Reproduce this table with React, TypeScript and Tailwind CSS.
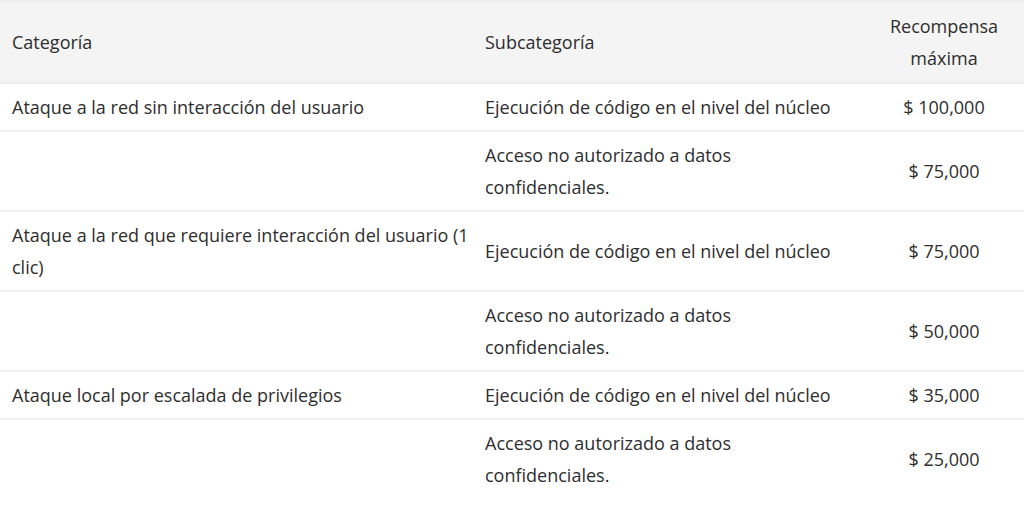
const rows = [
  { cat: "Ataque a la red sin interacción del usuario", sub: "Ejecución de código en el nivel del núcleo", amount: "$ 100,000" },
  { cat: "", sub: "Acceso no autorizado a datos confidenciales.", amount: "$ 75,000" },
  { cat: "Ataque a la red que requiere interacción del usuario (1 clic)", sub: "Ejecución de código en el nivel del núcleo", amount: "$ 75,000" },
  { cat: "", sub: "Acceso no autorizado a datos confidenciales.", amount: "$ 50,000" },
  { cat: "Ataque local por escalada de privilegios", sub: "Ejecución de código en el nivel del núcleo", amount: "$ 35,000" },
  { cat: "", sub: "Acceso no autorizado a datos confidenciales.", amount: "$ 25,000" },
];

export default function App() {
  return (
    <div className="bg-white w-[1024px] h-[507px] overflow-hidden font-['Open_Sans',sans-serif] text-[18px] leading-[32px] text-[#2e2e2e]">
      <table className="w-full border-collapse table-fixed">
        <colgroup>
          <col className="w-[473px]" />
          <col className="w-[391px]" />
          <col className="w-[160px]" />
        </colgroup>
        <thead>
          <tr className="bg-[#f4f4f4] border-t-2 border-b-2 border-[#ececec]">
            <th className="text-left font-normal pl-3 pr-0 py-2 align-middle">Categoría</th>
            <th className="text-left font-normal px-3 py-2 align-middle">Subcategoría</th>
            <th className="text-center font-normal px-3 py-2 align-middle">Recompensa máxima</th>
          </tr>
        </thead>
        <tbody>
          {rows.map((r, i) => (
            <tr key={i} className={i < rows.length - 1 ? "border-b-2 border-[#f0f0f0]" : ""}>
              <td className="pl-3 pr-0 py-[7px] align-middle">{r.cat}</td>
              <td className="px-3 py-[7px] align-middle">{r.sub}</td>
              <td className="px-3 py-[7px] text-center align-middle">{r.amount}</td>
            </tr>
          ))}
        </tbody>
      </table>
    </div>
  );
}
